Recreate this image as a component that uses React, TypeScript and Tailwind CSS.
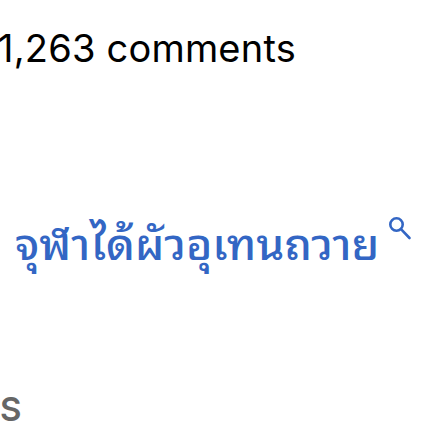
const SearchIcon = () => (
  <svg viewBox="0 0 24 24" className="w-[24px] h-[24px] shrink-0" fill="none" stroke="#3366c4" strokeWidth={2.6} strokeLinecap="round">
    <circle cx="8.5" cy="8.5" r="6.2" />
    <path d="M13 13.2 L21.5 22" />
  </svg>
);

const App = () => {
  return (
    <div className="w-[433px] h-[433px] overflow-hidden bg-white flex flex-col font-['Inter',sans-serif]">
      <h1 className="mt-[22px] -ml-[2px] text-[38px] leading-[52px] text-black tracking-[0.2px]">
        1,263 comments
      </h1>
      <div className="mt-[136px] ml-[15px] flex items-start gap-[9px]">
        <span className="text-[44.5px] leading-[60px] font-medium text-[#3366c4] font-['Noto_Sans_Thai_Looped','Noto_Sans_Thai',sans-serif]">
          จุฬาได้ผัวอุเทนถวาย
        </span>
        <div className="mt-[6px]">
          <SearchIcon />
        </div>
      </div>
      <div className="mt-[119px] text-[33px] leading-[40px] font-semibold text-[#666666]">S</div>
    </div>
  );
};

export default App;
